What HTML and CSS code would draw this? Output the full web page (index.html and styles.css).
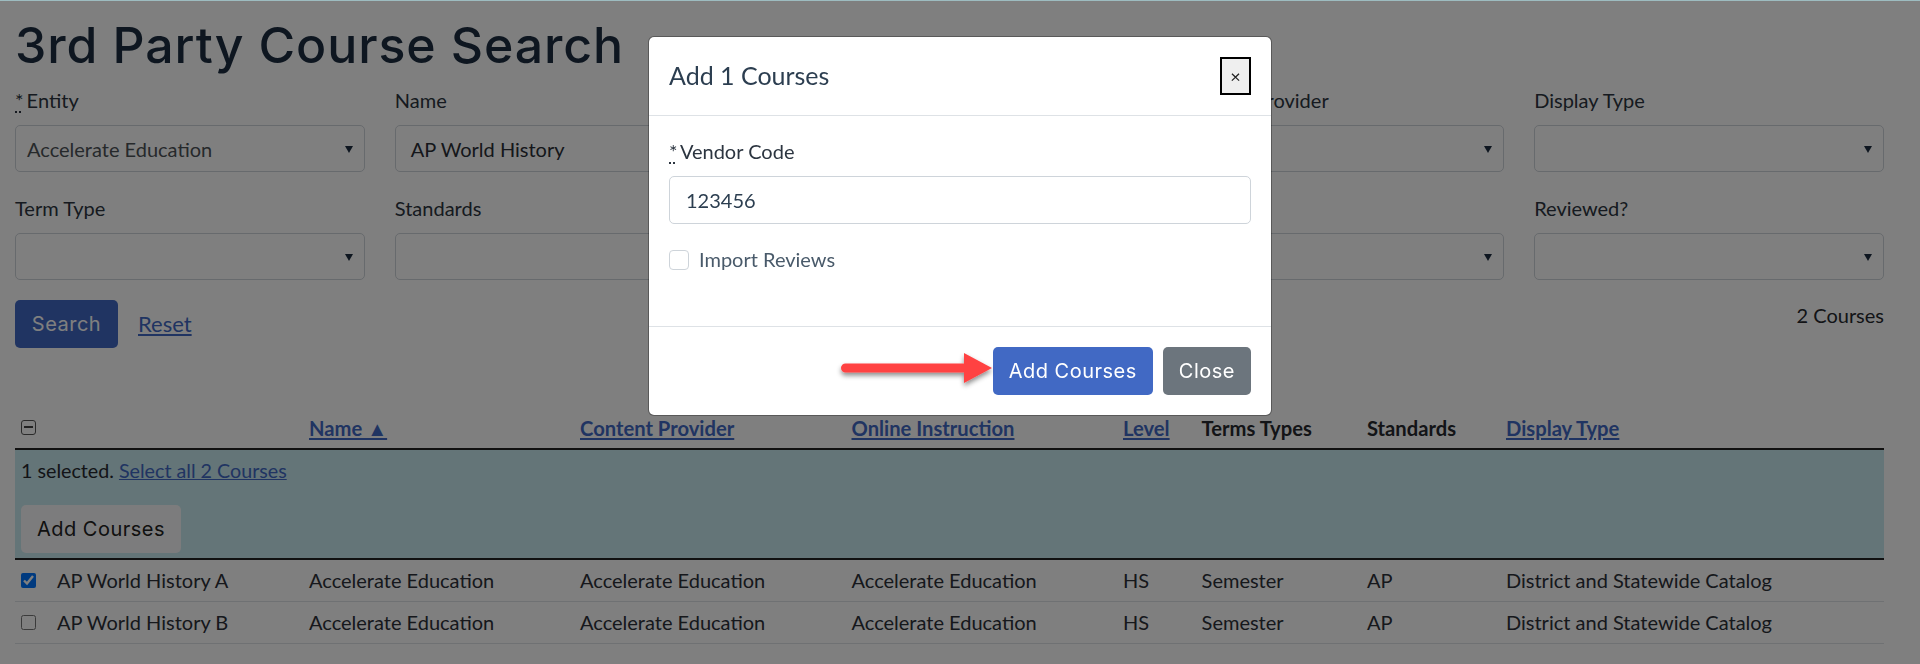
FILE: index.html
```html
<!DOCTYPE html>
<html lang="en">
<head>
<meta charset="utf-8">
<title>3rd Party Course Search</title>
<link rel="stylesheet" href="styles.css">
</head>
<body>
<main class="page">
  <h1 class="title">3rd Party Course Search</h1>
  <form class="filters">
    <div class="field"><label class="lbl"><abbr class="req">*</abbr> Entity</label><div class="sel has-value">Accelerate Education</div></div>
    <div class="field"><label class="lbl">Name</label><div class="text-in">AP World History</div></div>
    <div class="field"><label class="lbl">Level</label><div class="sel"></div></div>
    <div class="field"><label class="lbl">Instruction Provider</label><div class="sel"></div></div>
    <div class="field"><label class="lbl">Display Type</label><div class="sel"></div></div>
    <div class="field"><label class="lbl">Term Type</label><div class="sel"></div></div>
    <div class="field"><label class="lbl">Standards</label><div class="sel"></div></div>
    <div class="field"><label class="lbl">Content</label><div class="sel"></div></div>
    <div class="field"><label class="lbl">Online</label><div class="sel"></div></div>
    <div class="field"><label class="lbl">Reviewed?</label><div class="sel"></div></div>
  </form>
  <div class="actions">
    <button type="button" class="btn btn-primary">Search</button>
    <a class="link reset" href="#">Reset</a>
    <span class="count">2 Courses</span>
  </div>
  <table class="grid">
    <colgroup>
      <col class="c1"><col class="c2"><col class="c3"><col class="c4"><col class="c5"><col class="c6"><col class="c7"><col class="c8">
    </colgroup>
    <thead>
      <tr>
        <th><span class="minus-box"></span></th>
        <th><a class="link" href="#">Name ▲</a></th>
        <th><a class="link" href="#">Content Provider</a></th>
        <th><a class="link" href="#">Online Instruction</a></th>
        <th><a class="link" href="#">Level</a></th>
        <th>Terms Types</th>
        <th>Standards</th>
        <th><a class="link" href="#">Display Type</a></th>
      </tr>
    </thead>
    <tbody>
      <tr class="sel-row">
        <td colspan="8">
          <div>1 selected. <a class="link" href="#">Select all 2 Courses</a></div>
          <button type="button" class="btn btn-light">Add Courses</button>
        </td>
      </tr>
      <tr class="data-row">
        <td><label class="rowname"><input type="checkbox" class="cb" checked>AP World History A</label></td>
        <td>Accelerate Education</td><td>Accelerate Education</td><td>Accelerate Education</td><td>HS</td><td>Semester</td><td>AP</td><td>District and Statewide Catalog</td>
      </tr>
      <tr class="data-row data-row-last">
        <td><label class="rowname"><input type="checkbox" class="cb">AP World History B</label></td>
        <td>Accelerate Education</td><td>Accelerate Education</td><td>Accelerate Education</td><td>HS</td><td>Semester</td><td>AP</td><td>District and Statewide Catalog</td>
      </tr>
    </tbody>
  </table>
</main>

<div class="overlay">
  <section class="modal">
    <header class="m-head">
      <h2 class="m-title">Add 1 Courses</h2>
      <button type="button" class="m-close">×</button>
    </header>
    <div class="m-body">
      <label class="lbl m-lbl"><abbr class="req">*</abbr> Vendor Code</label>
      <input class="m-input" type="text" value="123456">
      <label class="m-check"><input type="checkbox" class="m-cb">Import Reviews</label>
    </div>
    <footer class="m-foot">
      <button type="button" class="btn btn-primary">Add Courses</button>
      <button type="button" class="btn btn-grey">Close</button>
      <svg class="arrow" width="170" height="48" viewBox="0 0 170 48" aria-hidden="true">
        <defs>
          <filter id="sh" x="-10%" y="-30%" width="120%" height="170%">
            <feDropShadow dx="0" dy="3" stdDeviation="2.5" flood-color="#000" flood-opacity=".45"/>
          </filter>
        </defs>
        <path d="M13.500 18.500H132V8L160 23 132 38V27.500H13.500A4.500 4.500 0 0 1 13.500 18.500Z" fill="#ff4343" filter="url(#sh)"/>
      </svg>
    </footer>
  </section>
</div>
</body>
</html>
```
FILE: styles.css
```css
* { box-sizing: border-box; }
html, body { margin: 0; height: 664px; overflow: hidden; }
body {
  background: #fff;
  color: #26292e;
  font-family: "Lato", sans-serif;
  font-size: 20px;
  line-height: 27px;
  border-top: 1px solid #9dbcc0;
}
.page { padding: 0 36px 0 15px; }
.title {
  margin: 0;
  padding-top: 12px;
  height: 87px;
  font-family: "Inter", sans-serif;
  font-weight: 500;
  font-size: 50px;
  line-height: 64px;
  color: #1c2d40;
  letter-spacing: 0.9px;
}
.filters {
  display: grid;
  grid-template-columns: repeat(5, 1fr);
  column-gap: 30px;
  row-gap: 24px;
}
.lbl { display: block; margin: -1px 0 11px; color: #2c3540; }
.req { margin-right: -2px; text-decoration: underline dotted; text-underline-offset: 3px; }
.sel, .text-in {
  position: relative;
  height: 47px;
  border: 1px solid #ced4da;
  border-radius: 5px;
  line-height: 47px;
  color: #4d5357;
}
.sel { padding-left: 11px; }
.text-in { padding-left: 15px; color: #2b2f36; }
.sel::after {
  content: "";
  position: absolute;
  right: 11px;
  top: 20px;
  border-left: 4.500px solid transparent;
  border-right: 4.500px solid transparent;
  border-top: 7px solid #1c2d40;
}
.actions {
  display: flex;
  align-items: flex-start;
  margin-top: 20px;
  height: 111px;
}
.btn {
  height: 48px;
  padding: 0 16px;
  border: 0;
  border-radius: 5px;
  font-family: "Inter", sans-serif;
  font-size: 20px;
  letter-spacing: 0.5px;
  color: #fff;
}
.btn-primary { background: #4169c4; }
.btn-grey { background: #6c757d; }
.btn-light { background: #f8f9fa; color: #222; }
.actions .btn { width: 103px; padding: 0; }
.reset { margin: 10px 0 0 20px; font-size: 22px; }
.count { margin: 2px 0 0 auto; }
.link { color: #4169c4; text-decoration: underline; }
.grid {
  width: 1869px;
  table-layout: fixed;
  border-collapse: collapse;
}
.c1 { width: 288px; }
.c2 { width: 271px; }
.c3, .c4 { width: 271.5px; }
.c5 { width: 78.6px; }
.c6 { width: 165.4px; }
.c7 { width: 139px; }
.c8 { width: 384px; }
th, td { padding: 7px 6px; text-align: left; vertical-align: middle; }
th {
  height: 38px;
  padding-top: 4px;
  padding-bottom: 6px;
  font-size: 20.2px;
  font-weight: 700;
  border-bottom: 2px solid #222;
  white-space: nowrap;
}
.sel-row td {
  padding: 7px 6px 5px;
  background: #c8eaf0;
  border-bottom: 2px solid #222;
  font-size: 19.700px;
}
.sel-row .btn { display: block; margin-top: 21px; width: 160px; padding: 0; }
.data-row td {
  height: 41px;
  padding: 7px 6px;
  border-bottom: 1px solid #dee2e6;
  color: #2c3038;
}
.data-row-last td { height: 42px; }
.rowname { display: flex; align-items: center; }
.cb { width: 15px; height: 15px; margin: 0 21px 0 0; }
.minus-box {
  display: block;
  position: relative;
  width: 15px;
  height: 15px;
  border: 1.500px solid #555;
  border-radius: 3px;
  margin-bottom: 2px;
}
.minus-box::after {
  content: "";
  position: absolute;
  left: 2px;
  right: 2px;
  top: 5px;
  height: 2px;
  background: #444;
}
.overlay {
  position: fixed;
  inset: 1px 0 0;
  display: flex;
  justify-content: center;
  align-items: flex-start;
  padding-top: 35px;
  background: rgba(0, 0, 0, .5);
}
.modal {
  width: 624px;
  height: 380px;
  display: flex;
  flex-direction: column;
  background: #fff;
  background-clip: padding-box;
  border: 1px solid rgba(0, 0, 0, .3);
  border-radius: 6px;
  color: #2c3e50;
}
.m-head {
  display: flex;
  justify-content: space-between;
  align-items: center;
  height: 79px;
  padding: 0 20px;
  border-bottom: 1px solid #dee2e6;
}
.m-title { margin: 0 0 3px; font-size: 25px; font-weight: 400; line-height: 30px; }
.m-close {
  width: 31px;
  height: 38px;
  padding: 0;
  background: #efefef;
  border: 2px solid #000;
  color: #222;
  font-family: "Lato", sans-serif;
  font-size: 18px;
}
.m-body { flex: 1; padding: 23px 20px 0; }
.m-input {
  display: block;
  width: 100%;
  height: 48px;
  padding: 0 16px;
  border: 1px solid #ced4da;
  border-radius: 5px;
  font: 20px "Lato", sans-serif;
  color: #2c3e50;
}
.m-check { display: flex; align-items: center; margin-top: 22px; color: #495a6a; }
.m-cb {
  appearance: none;
  width: 20px;
  height: 20px;
  margin: 0 10px 0 0;
  border: 1px solid #ced4da;
  border-radius: 4px;
  background: #fff;
}
.m-foot {
  position: relative;
  display: flex;
  justify-content: flex-end;
  gap: 10px;
  height: 89px;
  padding: 20px 20px 0;
  border-top: 1px solid #dee2e6;
}
.arrow { position: absolute; left: 183px; top: 18px; }
```
